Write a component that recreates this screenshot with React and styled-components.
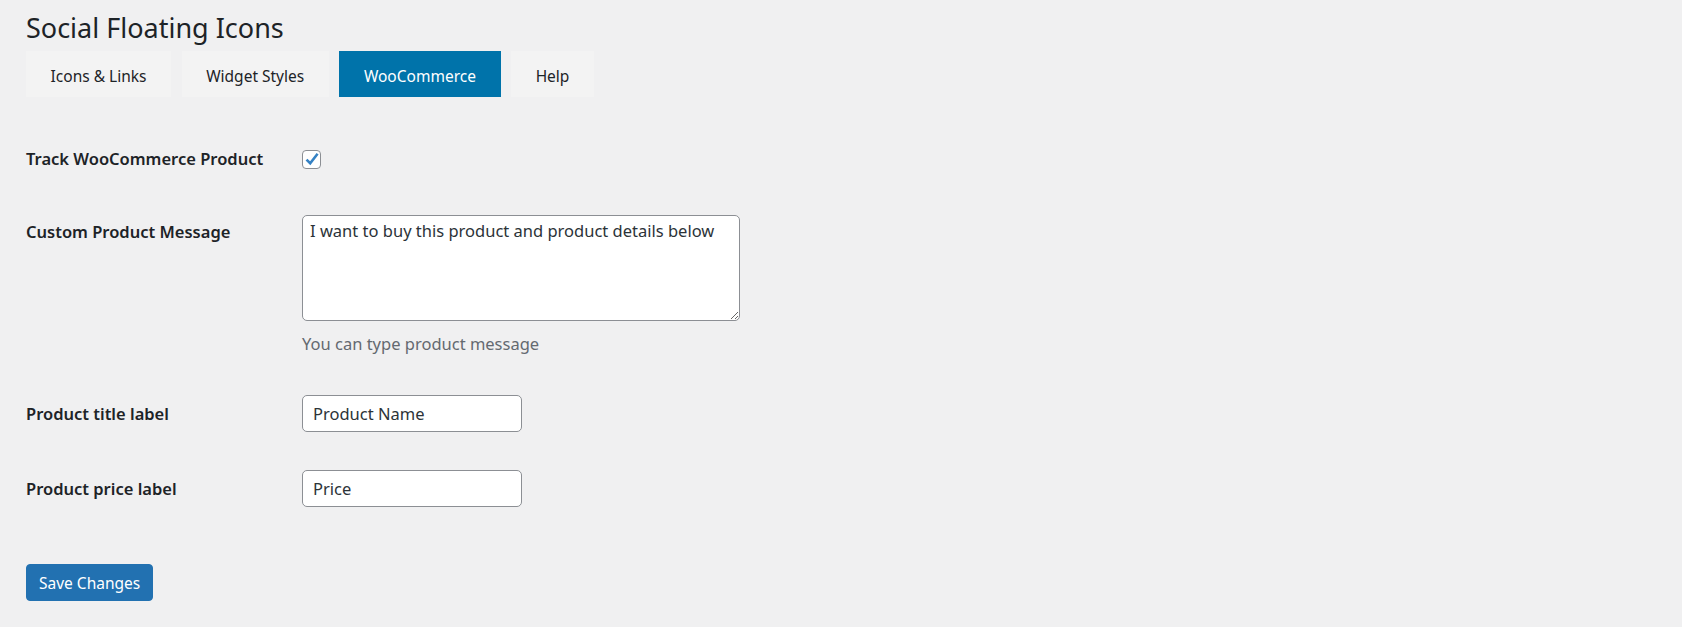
import React, { useState } from "react";
import styled, { createGlobalStyle } from "styled-components";

const GlobalStyle = createGlobalStyle`
  html, body {
    margin: 0;
    padding: 0;
    background: #f0f0f1;
  }
  body {
    font-family: "Noto Sans", "Open Sans", sans-serif;
    color: #1d2327;
  }
`;

const Wrap = styled.div`
  padding: 0 26px;
  min-height: 627px;
  box-sizing: border-box;
`;

const Title = styled.h1`
  margin: 0;
  padding-top: 9px;
  font-size: 27px;
  font-weight: 400;
  line-height: 37px;
  color: #1d2327;
`;

const Tabs = styled.nav`
  display: flex;
  gap: 10.5px;
  margin-top: 5px;
`;

const Tab = styled.a`
  display: flex;
  align-items: center;
  height: 46px;
  box-sizing: border-box;
  padding: 3px 24.6px 0;
  font-size: 15.5px;
  color: ${props => (props.$active ? "#ffffff" : "#1d2327")};
  background: ${props => (props.$active ? "#0073aa" : "#f3f3f3")};
  text-decoration: none;
  cursor: pointer;
`;

const Form = styled.form`
  display: flex;
  flex-direction: column;
`;

const Row = styled.div`
  display: grid;
  grid-template-columns: 276px auto;
  align-items: ${props => (props.$top ? "start" : "center")};
  margin-top: ${props => props.$gap}px;
`;

const Label = styled.label`
  font-size: 16.5px;
  font-weight: 600;
  line-height: 24px;
  color: #1d2327;
  padding-top: ${props => (props.$top ? "5px" : "0")};
`;

const Field = styled.div`
  display: flex;
  flex-direction: column;
  align-items: flex-start;
`;

const CheckBox = styled.span`
  width: 19px;
  height: 19px;
  box-sizing: border-box;
  border: 1px solid #8c8f94;
  border-radius: 4px;
  background: #fff;
  display: flex;
  align-items: center;
  justify-content: center;
  cursor: pointer;
`;

const TextArea = styled.textarea`
  width: 438px;
  height: 106px;
  box-sizing: border-box;
  padding: 2px 7px;
  border: 1px solid #8c8f94;
  border-radius: 5px;
  font-family: "Noto Sans", "Open Sans", sans-serif;
  font-size: 16.5px;
  line-height: 25px;
  color: #2c3338;
  background: #fff;
  outline: none;
`;

const Description = styled.p`
  margin: 11px 0 0;
  font-size: 16.5px;
  line-height: 24px;
  color: #646970;
`;

const TextInput = styled.input`
  width: 220px;
  height: 37px;
  box-sizing: border-box;
  padding: 0 10px;
  border: 1px solid #8c8f94;
  border-radius: 5px;
  font-family: "Noto Sans", "Open Sans", sans-serif;
  font-size: 16.5px;
  color: #2c3338;
  background: #fff;
  outline: none;
`;

const SaveButton = styled.button`
  align-self: flex-start;
  margin-top: 57px;
  height: 37px;
  padding: 0 12px;
  border: 1px solid #2271b1;
  border-radius: 4px;
  background: #2271b1;
  color: #fff;
  font-family: "Noto Sans", "Open Sans", sans-serif;
  font-size: 15.5px;
  cursor: pointer;
`;

const tabs = ["Icons & Links", "Widget Styles", "WooCommerce", "Help"];

export default function App() {
  const [checked, setChecked] = useState(true);
  const [message, setMessage] = useState(
    "I want to buy this product and product details below"
  );
  const [titleLabel, setTitleLabel] = useState("Product Name");
  const [priceLabel, setPriceLabel] = useState("Price");

  return (
    <>
      <GlobalStyle />
      <Wrap>
        <Title>Social Floating Icons</Title>
        <Tabs>
          {tabs.map(t => (
            <Tab key={t} $active={t === "WooCommerce"}>
              {t}
            </Tab>
          ))}
        </Tabs>
        <Form onSubmit={e => e.preventDefault()}>
          <Row $gap={50}>
            <Label>Track WooCommerce Product</Label>
            <CheckBox onClick={() => setChecked(!checked)}>
              {checked && (
                <svg width="16" height="16" viewBox="0 0 16 16">
                  <path
                    d="M2.5 8.6 L6.2 12.2 L13.6 2.8"
                    fill="none"
                    stroke="#3582c4"
                    strokeWidth="2.6"
                    strokeLinejoin="miter"
                  />
                </svg>
              )}
            </CheckBox>
          </Row>
          <Row $gap={44} $top>
            <Label $top>Custom Product Message</Label>
            <Field>
              <TextArea
                value={message}
                onChange={e => setMessage(e.target.value)}
              />
              <Description>You can type product message</Description>
            </Field>
          </Row>
          <Row $gap={39}>
            <Label>Product title label</Label>
            <TextInput
              value={titleLabel}
              onChange={e => setTitleLabel(e.target.value)}
            />
          </Row>
          <Row $gap={38}>
            <Label>Product price label</Label>
            <TextInput
              value={priceLabel}
              onChange={e => setPriceLabel(e.target.value)}
            />
          </Row>
          <SaveButton type="submit">Save Changes</SaveButton>
        </Form>
      </Wrap>
    </>
  );
}
